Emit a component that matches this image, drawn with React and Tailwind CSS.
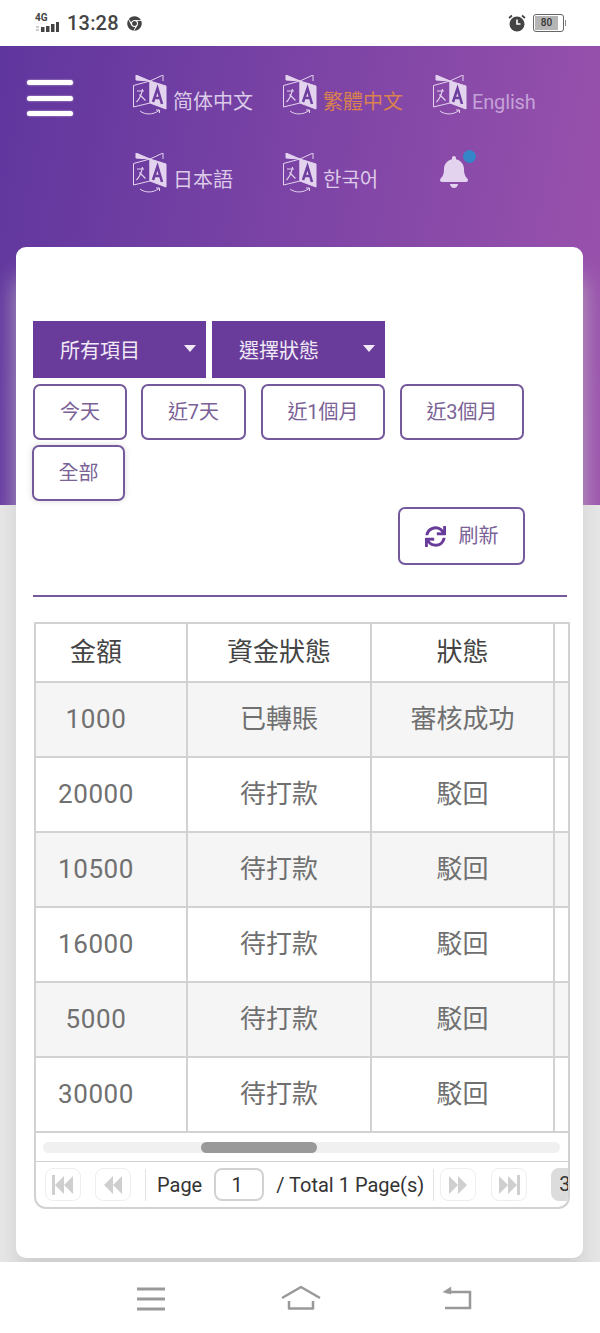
import React from "react";
import { FaBell, FaChrome, FaSync } from "react-icons/fa";

const font = "font-['Roboto','Noto_Sans_CJK_TC',sans-serif]";

function TranslateIcon() {
  return (
    <svg width="34" height="40" viewBox="0 0 34 40" className="shrink-0" fill="none" stroke="#e3d3ee" strokeWidth="1">
      <path d="M3 0 L17 6 L3 5 Z" fill="#e3d3ee" />
      <path d="M17 6 L30 0 V6" />
      <path d="M0.5 10.5 L17 6 V28 L0.5 32 Z" />
      <path d="M17 6 L33 11 V34 L17 28 Z" fill="#e3d3ee" />
      <path d="M20 27 L24.5 13.5 L29 29 M21.5 23 H27.5" stroke="#6f3fa0" strokeWidth="2.6" />
      <path d="M4 16 H11 M9.5 14 C8.5 20 6.5 24 3.5 27 M6.5 19.5 L12.5 25.5" strokeWidth="1.2" />
      <path d="M7 36 C12 40 20 40 26 35.5 M23 35 H26.5 V38" strokeWidth="1" />
    </svg>
  );
}

function Lang({ label, color }) {
  return (
    <div className="flex items-end gap-[6px] h-[40px]">
      <TranslateIcon />
      <span className={`text-[20px] leading-[27px] -mb-px ${color}`}>{label}</span>
    </div>
  );
}

function Arrow({ dir, bar }) {
  const flip = dir === "right" ? "scale(-1 1) translate(-24 0)" : "";
  return (
    <svg width="24" height="20" viewBox="0 0 24 20">
      <g transform={flip} fill="#cfcfcf">
        {bar && <rect x="1" y="0" width="3" height="20" />}
        <path d={bar ? "M4 10 L13 1 V19 Z M13 10 L22 1 V19 Z" : "M3 10 L12 1 V19 Z M12 10 L21 1 V19 Z"} />
      </g>
    </svg>
  );
}

function PagerBtn({ children }) {
  return (
    <button className="w-[36px] h-[33px] rounded-[8px] border border-[#eeeeee] flex items-center justify-center shrink-0">
      {children}
    </button>
  );
}

function Range({ label, width, active }) {
  return (
    <button
      className={`h-[56px] rounded-[7px] border-2 border-[#74599c] bg-white text-[20px] text-[#7a6296] ${width} ${active ? "-ml-px shadow-[0_0_6px_rgba(0,0,0,0.15)]" : ""}`}
    >
      {label}
    </button>
  );
}

function Select({ label }) {
  return (
    <div className="w-[173px] h-[57px] bg-[#693c9b] text-[20px] flex items-center justify-between pl-[27px] pr-[10px]">
      <span className="text-[#f1eaf6] pt-[2px]">{label}</span>
      <span className="w-0 h-0 border-l-[6px] border-r-[6px] border-t-[7px] border-l-transparent border-r-transparent border-t-[#f1eaf6] mb-[3px]" />
    </div>
  );
}

const rows = [
  ["1000", "已轉賬", "審核成功"],
  ["20000", "待打款", "駁回"],
  ["10500", "待打款", "駁回"],
  ["16000", "待打款", "駁回"],
  ["5000", "待打款", "駁回"],
  ["30000", "待打款", "駁回"],
];

const line = "border-2 border-[#d2d2d2]";

export default function App() {
  return (
    <div className={`${font} w-[600px] h-[1333px] flex flex-col overflow-hidden bg-white`}>
      {/* status bar */}
      <div className="h-[46px] shrink-0 flex items-center justify-between pl-[35px] pr-[34px] bg-white">
        <div className="flex items-center">
          <div className="relative w-[26px] h-[20px] mr-[6px]">
            <span className="absolute left-0 -top-[1px] text-[10px] leading-[11px] font-bold text-[#444]">4G</span>
            <svg width="26" height="20" viewBox="0 0 26 20" className="absolute inset-0">
              <rect x="1" y="13" width="3" height="2" fill="#ccc" />
              <rect x="1" y="16" width="3" height="2" fill="#ccc" />
              <rect x="6" y="14" width="3.5" height="5" fill="#444" />
              <rect x="11" y="13" width="3.5" height="6" fill="#444" />
              <rect x="16" y="11" width="3.5" height="8" fill="#444" />
              <rect x="21" y="9" width="3" height="10" fill="#444" />
            </svg>
          </div>
          <span className="text-[20px] font-medium text-[#444] tracking-[0.2px]">13:28</span>
          <FaChrome className="ml-[8px] text-[#444]" size={15} />
        </div>
        <div className="flex items-center">
          <svg width="18" height="18" viewBox="0 0 18 18" className="mr-[7px]">
            <circle cx="9" cy="10" r="7.5" fill="#444" />
            <path d="M9 5.5 V10 H12.5" stroke="#fff" strokeWidth="1.6" fill="none" />
            <path d="M1 4 L4 1.5 M17 4 L14 1.5" stroke="#444" strokeWidth="1.8" />
          </svg>
          <div className="w-[31px] h-[18px] rounded-[3px] border border-[#666] p-px flex">
            <div className="w-[23px] h-full bg-[#b5b5b5] text-[10px] leading-[14px] text-[#333] text-center font-medium">80</div>
          </div>
          <div className="w-px h-[6px] bg-[#888] ml-px" />
        </div>
      </div>

      {/* main */}
      <div className="relative flex-1 bg-[#e8e8e8] flex flex-col">
        <div className="absolute inset-x-0 top-0 h-[459px] bg-[linear-gradient(100deg,#5f369e,#9c53ad)]" />
        <div className="relative h-[201px] shrink-0 flex pt-[29px]">
          <div className="w-[133px] pl-[27px] pt-[5px] flex flex-col gap-[10.5px] shrink-0">
            <div className="w-[46px] h-[5px] rounded-full bg-white shadow-[0_0_2px_rgba(255,255,255,0.7)]" />
            <div className="w-[46px] h-[5px] rounded-full bg-white shadow-[0_0_2px_rgba(255,255,255,0.7)]" />
            <div className="w-[46px] h-[5px] rounded-full bg-white shadow-[0_0_2px_rgba(255,255,255,0.7)]" />
          </div>
          <div className="grid grid-cols-[150px_150px_150px] auto-rows-[78px] items-start">
            <Lang label="简体中文" color="text-[#dccbe8]" />
            <Lang label="繁體中文" color="text-[#d9824f]" />
            <Lang label="English" color="text-[#c4a2d8] -ml-px tracking-[-0.15px]" />
            <Lang label="日本語" color="text-[#dccbe8]" />
            <Lang label="한국어" color="text-[#dccbe8]" />
            <div className="relative pl-[5px] pt-[3px]">
              <FaBell size={32} className="text-[#e3d3ee]" />
              <span className="absolute left-[30px] top-[-3px] w-[13px] h-[13px] rounded-full bg-[#3585c9]" />
            </div>
          </div>
        </div>

        {/* card */}
        <div className="relative ml-[16px] w-[567px] h-[1011px] rounded-[10px] bg-white px-[17px] pt-[74px] shadow-[0_30px_25px_rgba(200,200,200,0.75)]">
          <div className="flex gap-[6px]">
            <Select label="所有項目" />
            <Select label="選擇狀態" />
          </div>
          <div className="flex flex-wrap gap-x-[15px] gap-y-[5px] mt-[6px] w-[500px]">
            <Range label="今天" width="w-[94px]" />
            <Range label="近7天" width="w-[105px] -ml-px" />
            <Range label="近1個月" width="w-[124px]" />
            <Range label="近3個月" width="w-[124px]" />
            <Range label="全部" width="w-[93px]" active />
          </div>
          <div className="flex justify-end mt-[6px] pr-[41px]">
            <button className="w-[127px] h-[58px] rounded-[7px] border-2 border-[#74599c] flex items-center justify-center gap-[13px] text-[20px] text-[#7a6296]">
              <FaSync size={21} className="text-[#693c9b]" />
              <span>刷新</span>
            </button>
          </div>
          <div className="h-[2px] bg-[#74599c] mt-[30px] w-[534px]" />

          <div className="mt-[25px] ml-px w-[536px] border-2 border-[#d2d2d2] border-t-0 rounded-b-[12px] overflow-hidden">
            <div className="overflow-hidden">
              <table className="border-collapse table-fixed w-[560px] text-[26px] text-center">
                <colgroup>
                  <col className="w-[151px]" />
                  <col className="w-[184px]" />
                  <col className="w-[183px]" />
                  <col className="w-[42px]" />
                </colgroup>
                <thead>
                  <tr className="h-[59px] text-[#444]">
                    <th className={`font-normal pr-[30px] ${line} border-l-0`}>金額</th>
                    <th className={`font-normal ${line}`}>資金狀態</th>
                    <th className={`font-normal ${line}`}>狀態</th>
                    <th className={line} />
                  </tr>
                </thead>
                <tbody>
                  {rows.map((r, i) => (
                    <tr key={r[0]} className={`h-[75px] text-[#707070] ${i % 2 === 0 ? "bg-[#f5f5f5]" : "bg-white"}`}>
                      <td className={`pr-[30px] tracking-[0.6px] ${line} border-l-0`}>{r[0]}</td>
                      <td className={line}>{r[1]}</td>
                      <td className={line}>{r[2]}</td>
                      <td className={line} />
                    </tr>
                  ))}
                </tbody>
              </table>
            </div>
            <div className="h-[29px] border-b border-[#d2d2d2] pl-[7px] pt-[9px]">
              <div className="w-[517px] h-[11px] rounded-full bg-[#f0f0f0] relative">
                <div className="absolute left-[158px] top-0 h-full w-[116px] rounded-full bg-[#999999]" />
              </div>
            </div>
            <div className="h-[45px] flex items-center pl-[9px] text-[20px] text-[#333] whitespace-nowrap overflow-hidden">
              <PagerBtn><Arrow dir="left" bar /></PagerBtn>
              <div className="w-[14px] shrink-0" />
              <PagerBtn><Arrow dir="left" /></PagerBtn>
              <div className="w-px h-[32px] bg-[#e4e4e4] ml-[14px] mr-[11px] shrink-0" />
              <span>Page</span>
              <div className="w-[50px] h-[33px] ml-[12px] mr-[12px] pr-[4px] rounded-[8px] border-2 border-[#d2d2d2] flex items-center justify-center shrink-0">1</div>
              <span>/ Total 1 Page(s)</span>
              <div className="w-px h-[32px] bg-[#e4e4e4] ml-[9px] mr-[6px] shrink-0" />
              <PagerBtn><Arrow dir="right" /></PagerBtn>
              <div className="w-[15px] shrink-0" />
              <PagerBtn><Arrow dir="right" bar /></PagerBtn>
              <div className="ml-[24px] w-[40px] h-[33px] bg-[#dcdcdc] rounded-l-[8px] pl-[8px] leading-[33px] shrink-0">3</div>
            </div>
          </div>
        </div>
      </div>

      {/* nav bar */}
      <div className="relative h-[71px] shrink-0 bg-white">
        <div className="flex items-start h-full">
          <svg width="28" height="24" viewBox="0 0 28 24" className="ml-[137px] mt-[25px]" stroke="#999" strokeWidth="3" fill="none">
            <path d="M0 2 H28 M0 12 H28 M0 22 H28" />
          </svg>
          <svg width="40" height="26" viewBox="0 0 40 26" className="ml-[116px] mt-[23px]" stroke="#999" strokeWidth="2.5" fill="none" strokeLinejoin="round">
            <path d="M1 13 L20 2 L39 13" />
            <path d="M8 16 V23.5 H32 V16" />
          </svg>
          <svg width="30" height="24" viewBox="0 0 30 24" className="ml-[121px] mt-[24px]" fill="none" stroke="#999" strokeWidth="2.5">
            <path d="M4 6 H28 V22 H3" />
            <path d="M1 6 L9 1 V8 Z" fill="#999" strokeWidth="0.5" />
          </svg>
        </div>
      </div>
    </div>
  );
}
